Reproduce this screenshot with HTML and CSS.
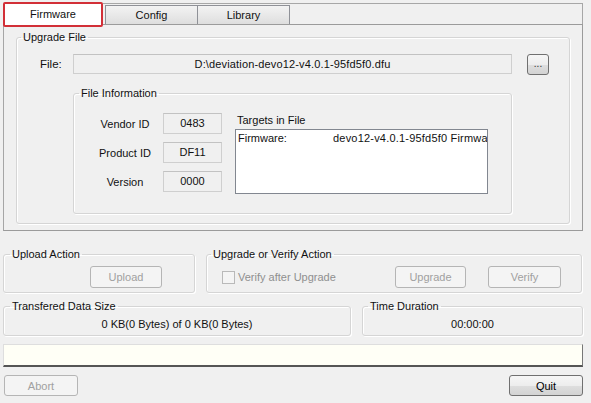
FILE: index.html
```html
<!DOCTYPE html>
<html>
<head>
<meta charset="utf-8">
<link rel="stylesheet" href="styles.css">
</head>
<body>
<div class="app">
  <div class="tabs">
    <div class="tab active">Firmware</div>
    <div class="tab">Config</div>
    <div class="tab second">Library</div>
  </div>
  <div class="panel">
    <fieldset class="group upgrade">
      <legend>Upgrade File</legend>
      <div class="file-row">
        <span class="file-label">File:</span>
        <div class="field file-field">D:\deviation-devo12-v4.0.1-95fd5f0.dfu</div>
        <button class="btn browse">...</button>
      </div>
      <fieldset class="group info">
        <legend>File Information</legend>
        <div class="info-body">
          <div class="ids">
            <div class="id-row"><span class="id-label">Vendor ID</span><div class="field idbox">0483</div></div>
            <div class="id-row"><span class="id-label">Product ID</span><div class="field idbox">DF11</div></div>
            <div class="id-row"><span class="id-label">Version</span><div class="field idbox">0000</div></div>
          </div>
          <div class="targets">
            <div class="targets-label">Targets in File</div>
            <div class="listbox">
              <div class="list-row"><span class="c1">Firmware:</span><span class="c2">devo12-v4.0.1-95fd5f0 Firmware</span></div>
            </div>
          </div>
        </div>
      </fieldset>
    </fieldset>
  </div>

  <div class="row actions">
    <fieldset class="group upload">
      <legend>Upload Action</legend>
      <div class="upload-body"><button class="btn disabled upload-btn">Upload</button></div>
    </fieldset>
    <fieldset class="group verify">
      <legend>Upgrade or Verify Action</legend>
      <div class="verify-body">
        <span class="check"></span>
        <span class="check-label">Verify after Upgrade</span>
        <button class="btn disabled upgrade-btn">Upgrade</button>
        <button class="btn disabled verify-btn">Verify</button>
      </div>
    </fieldset>
  </div>

  <div class="row stats">
    <fieldset class="group transfer">
      <legend>Transfered Data Size</legend>
      <div class="value">0 KB(0 Bytes) of 0 KB(0 Bytes)</div>
    </fieldset>
    <fieldset class="group time">
      <legend>Time Duration</legend>
      <div class="value">00:00:00</div>
    </fieldset>
  </div>

  <div class="status"></div>

  <div class="row buttons">
    <button class="btn disabled abort">Abort</button>
    <button class="btn quit">Quit</button>
  </div>
</div>
</body>
</html>
```

FILE: styles.css
```css
* { box-sizing: border-box; }
html, body { margin: 0; padding: 0; }
body {
  background: #f0f0f0;
  font-family: "Liberation Sans", Arial, sans-serif;
  font-size: 11px;
  color: #111;
  width: 591px;
  height: 403px;
  overflow: hidden;
}
.app {
  display: flex;
  flex-direction: column;
  padding: 3px 8px 0 3px;
}

/* Tabs */
.tabs {
  display: flex;
  height: 21px;
  border-top: 1px solid #a7a7a7;
  border-right: 1px solid #a7a7a7;
  margin-left: 100px;
  position: relative;
}
.tab {
  height: 19px;
  margin-top: 1px;
  width: 93px;
  border: 1px solid #8f9197;
  border-bottom: none;
  background: linear-gradient(#f3f3f3, #dedede);
  text-align: center;
  line-height: 19px;
  font-size: 11px;
}
.tab.active {
  position: absolute;
  left: -100px;
  top: -2px;
  margin: 0;
  width: 100px;
  height: 25px;
  background: #fff;
  border: 2px solid #d22f37;
  border-radius: 2px;
  line-height: 21px;
  z-index: 2;
}
.tab:nth-child(2) { margin-left: 2px; }
.tab.second { margin-left: -1px; }

/* Panel */
.panel {
  height: 207px;
  border: 1px solid #9b9b9b;
  border-left-color: #a6a6a6;
  background: #f0f0f0;
  display: flex;
  flex-direction: column;
}

/* Group box */
fieldset.group {
  margin: 0;
  padding: 0;
  min-width: 0;
  border: 1px solid #d5d5d5;
  border-radius: 3px;
  box-shadow: inset 1px 1px 0 #fff, 1px 1px 0 #fff;
}
fieldset.group legend {
  padding: 0 2px;
  margin-left: 4px;
  line-height: 14px;
  font-size: 11px;
}

.upgrade {
  margin: 5px 0 0 12px !important;
  width: 554px;
  height: 194px;
}
.file-row {
  display: flex;
  align-items: flex-start;
  margin-top: 10px;
}
.file-label {
  width: 33px;
  margin-left: 23px;
  line-height: 20px;
  font-size: 11.5px;
}
.field {
  background: #f0f0f0;
  border: 1px solid #cfcfcf;
  border-top-color: #c2c2c2;
  text-align: center;
}
.file-field {
  width: 439px;
  height: 20px;
  line-height: 18px;
  font-size: 11px;
  letter-spacing: 0.15px;
}
.btn {
  font-family: "Liberation Sans", Arial, sans-serif;
  font-size: 11px;
  padding: 0;
  border: 1px solid #707070;
  border-radius: 3px;
  background: linear-gradient(#f6f6f6 0%, #ededed 50%, #dedede 51%, #d3d3d3 100%);
  color: #000;
}
.btn.disabled {
  border-color: #b5b5b5;
  background: #f4f4f4;
  color: #a0a0a0;
}
.browse {
  width: 22px;
  height: 21px;
  margin-left: 15px;
  line-height: 12px;
  padding-bottom: 2px;
  font-size: 10px;
  color: #333;
}

.info {
  margin: 11px 0 0 56px !important;
  width: 439px;
  height: 128px;
}
.info legend { margin-left: 5px !important; }
.info-body {
  display: flex;
  padding-top: 13px;
}
.ids {
  display: flex;
  flex-direction: column;
  gap: 8px;
  margin-left: 21px;
}
.id-row {
  display: flex;
  align-items: center;
}
.id-label {
  width: 60px;
  text-align: center;
  font-size: 11px;
}
.idbox {
  margin-left: 8px;
  width: 59px;
  height: 21px;
  line-height: 19px;
}
.targets {
  margin-left: 13px;
  margin-top: -1px;
}
.targets-label {
  margin-left: 2px;
  line-height: 13px;
  height: 17px;
  padding-top: 2px;
}
.listbox {
  width: 253px;
  height: 65px;
  background: #fff;
  border: 1px solid #828790;
  overflow: hidden;
  padding: 1px 0 0 2px;
}
.list-row {
  display: flex;
  white-space: nowrap;
  line-height: 14px;
}
.c1 { width: 95px; flex: none; }
.c2 { flex: none; letter-spacing: 0.2px; }

/* Rows below */
.row { display: flex; }
.actions {
  margin-top: 16px;
  gap: 11px;
}
.actions fieldset.group legend,
.stats fieldset.group legend { margin-left: 6px; }
.verify legend { margin-left: 4px !important; }
.time legend { margin-left: 5px !important; }
.upload { width: 192px; height: 46px; }
.verify { width: 376px; height: 46px; }
.upload-body { padding: 5px 0 0 86px; }
.upload-btn { width: 72px; height: 22px; }
.verify-body {
  display: flex;
  align-items: center;
  padding-top: 5px;
}
.check {
  width: 13px;
  height: 13px;
  margin-left: 15px;
  border: 1px solid #b9b9b9;
  background: #f4f4f4;
}
.check-label {
  margin-left: 3px;
  color: #8f8f8f;
  width: 157px;
}
.upgrade-btn { width: 71px; height: 22px; }
.verify-btn { width: 73px; height: 22px; margin-left: 22px; }

.stats {
  margin-top: 6px;
  gap: 11px;
}
.transfer { width: 348px; height: 37px; }
.time { width: 221px; height: 37px; }
.value {
  text-align: center;
  padding-top: 4px;
  line-height: 14px;
}

.status {
  margin-top: 8px;
  height: 23px;
  width: 580px;
  background: #fffff6;
  border: 1px solid #dedede;
  border-bottom: 2px solid #555;
  border-right: 1px solid #777;
}

.buttons {
  margin-top: 8px;
  justify-content: space-between;
  width: 580px;
}
.abort { width: 74px; height: 21px; margin-left: 1px; }
.quit { width: 74px; height: 21px; }
```
